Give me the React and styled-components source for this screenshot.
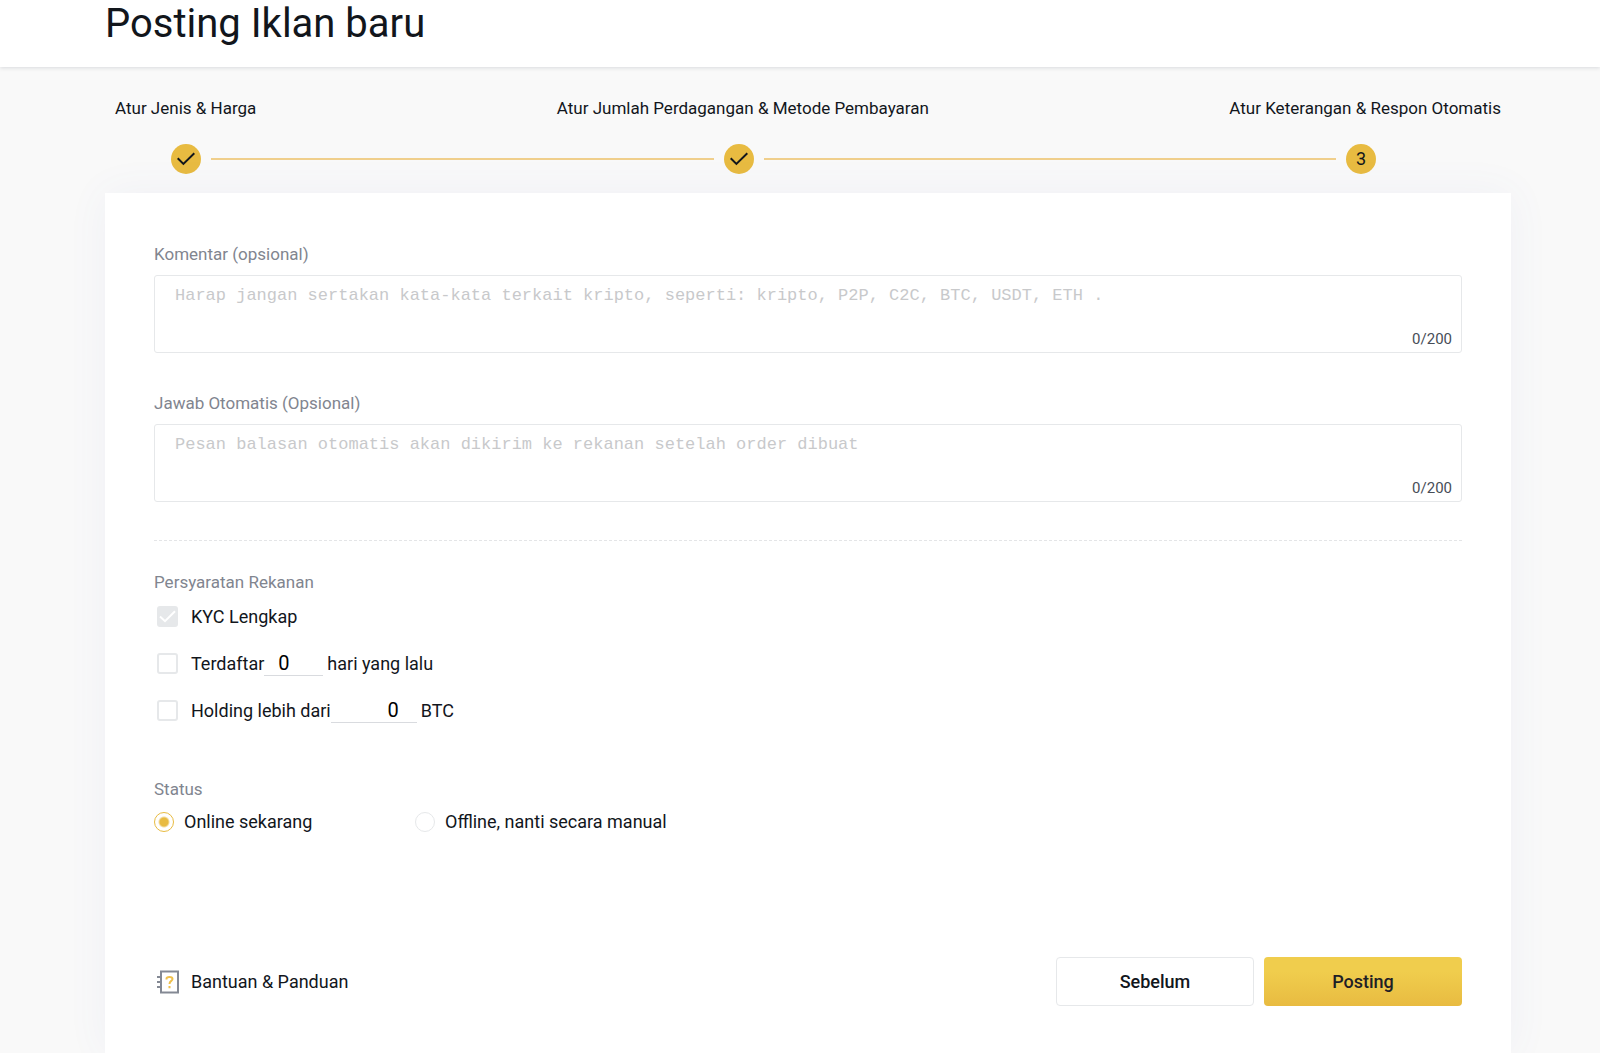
import React, { useState } from "react";
import styled, { createGlobalStyle, css } from "styled-components";

const GlobalStyle = createGlobalStyle`
  *, *::before, *::after { box-sizing: border-box; }
  body {
    margin: 0;
    background: #f9f9f9;
    color: #12161c;
    font-family: Roboto, "Liberation Sans", sans-serif;
    font-size: 18px;
    line-height: 24px;
  }
`;

const Page = styled.div`
  display: flex;
  flex-direction: column;
  min-height: 100vh;
`;

const Header = styled.header`
  position: relative;
  z-index: 1;
  padding: 0 89px 20px 105px;
  background: #fff;
  box-shadow: 0 1px 4px rgba(24, 32, 60, 0.14);
`;

const Title = styled.h1`
  margin: 0;
  font-size: 40px;
  font-weight: 400;
  line-height: 47px;
`;

const Main = styled.main`
  flex: 1;
  display: flex;
  flex-direction: column;
  padding: 0 89px 0 105px;
`;

const StepLabels = styled.ol`
  display: flex;
  justify-content: space-between;
  margin: 0;
  padding: 29px 10px 0;
  font-size: 17px;
  list-style: none;
`;

const StepTrack = styled.div`
  display: flex;
  align-items: center;
  gap: 10px;
  padding: 24px 135px 19px 66px;
`;

const StepDot = styled.span`
  display: flex;
  align-items: center;
  justify-content: center;
  flex: none;
  width: 30px;
  height: 30px;
  border-radius: 50%;
  background: #e8bb41;
`;

const StepLine = styled.span`
  flex: ${(p) => p.$grow} 1 0;
  height: 2px;
  background: #f0cf8c;
`;

const Card = styled.form`
  flex: 1;
  display: flex;
  flex-direction: column;
  padding: 49px 49px 47px;
  background: #fff;
  box-shadow: 0 0 40px rgba(90, 100, 190, 0.06);
`;

const captionText = css`
  color: #81858f;
  font-size: 17px;
  line-height: 24px;
`;

const Field = styled.div`
  position: relative;
  display: flex;
  flex-direction: column;
  gap: 9px;
  margin-bottom: 38px;
`;

const FieldLabel = styled.label`
  ${captionText}
`;

const TextArea = styled.textarea`
  display: block;
  width: 100%;
  height: 78px;
  padding: 8px 20px;
  border: 1px solid #e6e8ea;
  border-radius: 3px;
  outline: none;
  resize: none;
  background: #fff;
  color: #12161c;
  font-family: "Liberation Mono", monospace;
  font-size: 17px;
  line-height: 24px;

  &::placeholder {
    color: #c8c9cb;
    opacity: 1;
  }
`;

const Counter = styled.span`
  position: absolute;
  right: 10px;
  bottom: 2px;
  color: #474d57;
  font-size: 15px;
`;

const Divider = styled.hr`
  width: 100%;
  margin: 0 0 29px;
  border: 0;
  border-top: 1px dashed #e4e5e7;
`;

const Group = styled.fieldset`
  min-width: 0;
  margin: 0;
  padding: 0;
  border: 0;
`;

const Legend = styled.legend`
  ${captionText}
  padding: 0;
`;

const Requirements = styled.div`
  display: flex;
  flex-direction: column;
  gap: 2px;
  padding-bottom: 44px;
`;

const Requirement = styled.div`
  display: flex;
  align-items: center;
  height: 45px;
`;

const CheckLabel = styled.label`
  display: flex;
  align-items: center;
  gap: 13px;
  padding-left: 3px;
`;

const CheckFrame = styled.span`
  display: grid;
  flex: none;
  width: 21px;
  height: 21px;

  > * { grid-area: 1 / 1; }
  svg { pointer-events: none; }
`;

const CheckBox = styled.input`
  appearance: none;
  width: 21px;
  height: 21px;
  margin: 0;
  border: 2px solid #e6e8ea;
  border-radius: 3px;
  background: #fff;

  &:checked { background: #e6e8ea; }
`;

const Amount = styled.input`
  width: ${(p) => p.$width}px;
  height: 24px;
  margin-right: 4px;
  padding: 0 18px 0 14px;
  border: 0;
  border-bottom: 1px solid #d9dbdf;
  outline: none;
  background: transparent;
  color: #000;
  font-family: inherit;
  font-size: 20px;
  text-align: ${(p) => p.$align};
`;

const StatusOptions = styled.div`
  display: flex;
  padding-top: 9px;
`;

const RadioLabel = styled.label`
  display: flex;
  align-items: center;
  gap: 10px;
  min-width: 261px;
`;

const Radio = styled.input`
  appearance: none;
  flex: none;
  width: 20px;
  height: 20px;
  margin: 0;
  border: 1px solid #e6e8ea;
  border-radius: 50%;
  background: #fff;

  &:checked {
    border-color: #e8bb41;
    background: radial-gradient(circle, #e8bb41 4px, #fff 6px);
  }
`;

const Footer = styled.footer`
  display: flex;
  align-items: center;
  justify-content: space-between;
  margin-top: auto;
`;

const HelpLink = styled.a`
  display: flex;
  align-items: center;
  gap: 11px;
  padding-left: 3px;
  color: inherit;
  text-decoration: none;
`;

const Actions = styled.div`
  display: flex;
  gap: 10px;
`;

const Button = styled.button`
  width: 198px;
  height: 49px;
  border: 1px solid #e6e8ea;
  border-radius: 4px;
  background: #fff;
  color: #12161c;
  font-family: inherit;
  font-size: 18px;
  font-weight: 500;
  cursor: pointer;

  ${(p) =>
    p.$primary &&
    css`
      border: 0;
      background: linear-gradient(#f0cd4d 30%, #e8bb41);
      color: #1e2026;
    `}
`;

const StepCheck = () => (
  <svg width="18" height="14" viewBox="0 0 18 14" fill="none" stroke="#12161c" strokeWidth="2" aria-hidden="true">
    <path d="M0.7 6.2 6.4 11.9 17.3 1.3" />
  </svg>
);

const BoxCheck = () => (
  <svg width="21" height="21" viewBox="0 0 21 21" fill="none" stroke="#fff" strokeWidth="2" aria-hidden="true">
    <path d="M3 10.5 8 15.2 18 5.2" />
  </svg>
);

const GuideIcon = () => (
  <svg width="23" height="24" viewBox="0 0 23 24" fill="none" aria-hidden="true">
    <rect x="4" y="1.5" width="17" height="21" stroke="#848994" strokeWidth="2" />
    <path d="M0 7h5M0 12h5M0 17h5" stroke="#848994" strokeWidth="2" />
    <path d="M9.5 9.5V8.800C9.500 7.600 10.700 7 12.500 7s3 .8 3 2.100c0 1.900-3 1.800-3 4.900M12.500 16v2.200" stroke="#efc04d" strokeWidth="2" />
  </svg>
);

function MessageField({ id, label, placeholder }) {
  const [value, setValue] = useState("");
  return (
    <Field>
      <FieldLabel htmlFor={id}>{label}</FieldLabel>
      <TextArea
        id={id}
        maxLength={200}
        placeholder={placeholder}
        value={value}
        onChange={(e) => setValue(e.target.value)}
      />
      <Counter>{value.length}/200</Counter>
    </Field>
  );
}

function Check({ children, ...props }) {
  return (
    <CheckLabel>
      <CheckFrame>
        <CheckBox type="checkbox" {...props} />
        {props.defaultChecked && <BoxCheck />}
      </CheckFrame>
      {children}
    </CheckLabel>
  );
}

export default function App() {
  return (
    <Page>
      <GlobalStyle />
      <Header>
        <Title>Posting Iklan baru</Title>
      </Header>
      <Main>
        <StepLabels>
          <li>Atur Jenis &amp; Harga</li>
          <li>Atur Jumlah Perdagangan &amp; Metode Pembayaran</li>
          <li>Atur Keterangan &amp; Respon Otomatis</li>
        </StepLabels>
        <StepTrack>
          <StepDot><StepCheck /></StepDot>
          <StepLine $grow={504} />
          <StepDot><StepCheck /></StepDot>
          <StepLine $grow={573} />
          <StepDot>3</StepDot>
        </StepTrack>
        <Card onSubmit={(e) => e.preventDefault()}>
          <MessageField
            id="comment"
            label="Komentar (opsional)"
            placeholder="Harap jangan sertakan kata-kata terkait kripto, seperti: kripto, P2P, C2C, BTC, USDT, ETH ."
          />
          <MessageField
            id="auto-reply"
            label="Jawab Otomatis (Opsional)"
            placeholder="Pesan balasan otomatis akan dikirim ke rekanan setelah order dibuat"
          />
          <Divider />
          <Group>
            <Legend>Persyaratan Rekanan</Legend>
            <Requirements>
              <Requirement>
                <Check defaultChecked disabled>KYC Lengkap</Check>
              </Requirement>
              <Requirement>
                <Check>Terdaftar</Check>
                <Amount $width={59} $align="left" defaultValue="0" aria-label="Jumlah hari" />
                <span>hari yang lalu</span>
              </Requirement>
              <Requirement>
                <Check>Holding lebih dari</Check>
                <Amount $width={86} $align="right" defaultValue="0" aria-label="Jumlah BTC" />
                <span>BTC</span>
              </Requirement>
            </Requirements>
          </Group>
          <Group>
            <Legend>Status</Legend>
            <StatusOptions>
              <RadioLabel>
                <Radio type="radio" name="status" defaultChecked />
                Online sekarang
              </RadioLabel>
              <RadioLabel>
                <Radio type="radio" name="status" />
                Offline, nanti secara manual
              </RadioLabel>
            </StatusOptions>
          </Group>
          <Footer>
            <HelpLink href="#bantuan">
              <GuideIcon />
              Bantuan &amp; Panduan
            </HelpLink>
            <Actions>
              <Button type="button">Sebelum</Button>
              <Button type="submit" $primary>Posting</Button>
            </Actions>
          </Footer>
        </Card>
      </Main>
    </Page>
  );
}
